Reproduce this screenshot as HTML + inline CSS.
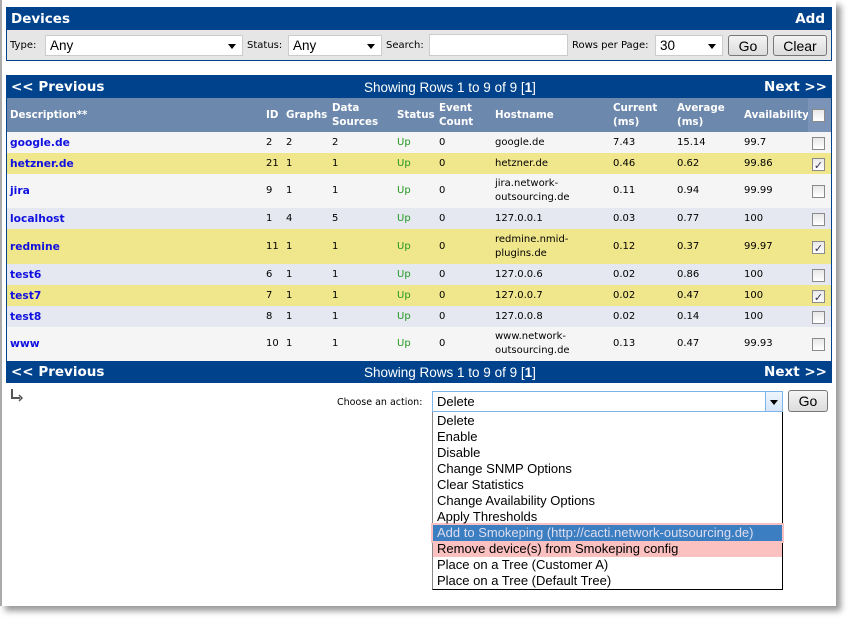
<!DOCTYPE html>
<html><head><meta charset="utf-8"><style>
*{margin:0;padding:0;box-sizing:border-box}
body{width:850px;height:619px;background:#fff;position:relative;overflow:hidden;font-family:"DejaVu Sans",Verdana,sans-serif;font-size:10px}
#frame{position:absolute;left:0;top:0;width:836px;height:606px;background:#fff;border-left:2px solid #aaa;box-shadow:5px 5px 6px #999}
.abs{position:absolute}
.bar{background:#00438c;color:#fff;font-weight:bold}
.row{position:absolute;left:7px;width:824px;display:flex;align-items:center}
.row>div{position:absolute;line-height:14px}
.lnk{color:#1010e0;font-weight:bold;font-size:10.7px}
.up{color:#229922}
.cb{width:13px;height:13px;border:1px solid #8a8a8a;background:linear-gradient(#e8e8e8,#fff);left:805px;top:50%;margin-top:-6px;font-size:11px;line-height:11px;color:#335;text-align:center}
.sel{font-family:"Liberation Sans",Arial,sans-serif;font-size:13.5px;background:#fff;border:1px solid #ccc}
.btn{font-family:"Liberation Sans",Arial,sans-serif;font-size:14px;border:1px solid #777;border-radius:3px;background:linear-gradient(#f4f4f4,#dcdcdc);text-align:center;line-height:20px}
.arr{position:absolute;right:6px;top:8px;width:0;height:0;border-left:4px solid transparent;border-right:4px solid transparent;border-top:5px solid #000}
.dd div{font-family:"Liberation Sans",Arial,sans-serif;font-size:13px;height:16px;line-height:16px;padding-left:4px;color:#000}
.hd{font-size:10.3px}
</style></head><body>
<div id="frame"></div>

<div class="abs" style="left:6px;top:7px;width:826px;height:54px;border:1px solid #00438c;background:#e6e6e6"></div>
<div class="abs bar" style="left:6px;top:7px;width:826px;height:23px;font-size:13.5px;line-height:24px;padding-left:5px">Devices<span style="position:absolute;right:7px">Add</span></div>
<div class="abs" style="left:10px;top:40px">Type:</div>
<div class="abs sel" style="left:45px;top:35px;width:198px;height:21px;padding-left:4px;line-height:19px">Any<span class="arr"></span></div>
<div class="abs" style="left:247px;top:40px">Status:</div>
<div class="abs sel" style="left:288px;top:35px;width:94px;height:21px;padding-left:4px;line-height:19px">Any<span class="arr"></span></div>
<div class="abs" style="left:386px;top:40px">Search:</div>
<div class="abs sel" style="left:429px;top:34px;width:139px;height:22px"></div>
<div class="abs" style="left:572px;top:40px">Rows per Page:</div>
<div class="abs sel" style="left:655px;top:35px;width:68px;height:21px;padding-left:4px;line-height:19px">30<span class="arr"></span></div>
<div class="abs btn" style="left:728px;top:35px;width:40px;height:21px">Go</div>
<div class="abs btn" style="left:773px;top:35px;width:54px;height:21px">Clear</div>

<div class="abs" style="left:6px;top:75px;width:826px;height:308px;border:1px solid #00438c;background:#f5f5f5"></div>
<div class="abs bar" style="left:6px;top:76px;width:826px;height:22px;font-size:13.5px;line-height:23px">
<span style="position:absolute;left:5px">&lt;&lt; Previous</span>
<span style="position:absolute;left:358px;font-weight:normal;font-family:'Liberation Sans',Arial,sans-serif;font-size:13.5px">Showing Rows 1 to 9 of 9 [<b>1</b>]</span>
<span style="position:absolute;right:5px">Next &gt;&gt;</span></div>

<div class="row hd" style="top:98px;height:34px;background:#6d88ad;color:#fff;font-weight:bold">
<div style="left:3px">Description**</div>
<div style="left:259px">ID</div>
<div style="left:279px">Graphs</div>
<div style="left:325px">Data<br>Sources</div>
<div style="left:390px">Status</div>
<div style="left:432px">Event<br>Count</div>
<div style="left:488px">Hostname</div>
<div style="left:606px">Current<br>(ms)</div>
<div style="left:670px">Average<br>(ms)</div>
<div style="left:737px">Availability</div>
<div style="left:801px;width:23px;height:34px;background:#7a93b6"></div>
<div class="cb"></div>
</div>

<div class="row" style="top:132px;height:21px;background:#f5f5f5"><div class="lnk" style="left:3px">google.de</div><div style="left:259px">2</div><div style="left:279px">2</div><div style="left:325px">2</div><div class="up" style="left:390px">Up</div><div style="left:432px">0</div><div style="left:488px">google.de</div><div style="left:606px">7.43</div><div style="left:670px">15.14</div><div style="left:737px">99.7</div><div class="cb"></div></div>
<div class="row" style="top:153px;height:21px;background:#f0e68c"><div class="lnk" style="left:3px">hetzner.de</div><div style="left:259px">21</div><div style="left:279px">1</div><div style="left:325px">1</div><div class="up" style="left:390px">Up</div><div style="left:432px">0</div><div style="left:488px">hetzner.de</div><div style="left:606px">0.46</div><div style="left:670px">0.62</div><div style="left:737px">99.86</div><div class="cb">✓</div></div>
<div class="row" style="top:174px;height:34px;background:#f5f5f5"><div class="lnk" style="left:3px">jira</div><div style="left:259px">9</div><div style="left:279px">1</div><div style="left:325px">1</div><div class="up" style="left:390px">Up</div><div style="left:432px">0</div><div style="left:488px">jira.network-<br>outsourcing.de</div><div style="left:606px">0.11</div><div style="left:670px">0.94</div><div style="left:737px">99.99</div><div class="cb"></div></div>
<div class="row" style="top:208px;height:21px;background:#e5e8f0"><div class="lnk" style="left:3px">localhost</div><div style="left:259px">1</div><div style="left:279px">4</div><div style="left:325px">5</div><div class="up" style="left:390px">Up</div><div style="left:432px">0</div><div style="left:488px">127.0.0.1</div><div style="left:606px">0.03</div><div style="left:670px">0.77</div><div style="left:737px">100</div><div class="cb"></div></div>
<div class="row" style="top:229px;height:35px;background:#f0e68c"><div class="lnk" style="left:3px">redmine</div><div style="left:259px">11</div><div style="left:279px">1</div><div style="left:325px">1</div><div class="up" style="left:390px">Up</div><div style="left:432px">0</div><div style="left:488px">redmine.nmid-<br>plugins.de</div><div style="left:606px">0.12</div><div style="left:670px">0.37</div><div style="left:737px">99.97</div><div class="cb">✓</div></div>
<div class="row" style="top:264px;height:21px;background:#e5e8f0"><div class="lnk" style="left:3px">test6</div><div style="left:259px">6</div><div style="left:279px">1</div><div style="left:325px">1</div><div class="up" style="left:390px">Up</div><div style="left:432px">0</div><div style="left:488px">127.0.0.6</div><div style="left:606px">0.02</div><div style="left:670px">0.86</div><div style="left:737px">100</div><div class="cb"></div></div>
<div class="row" style="top:285px;height:21px;background:#f0e68c"><div class="lnk" style="left:3px">test7</div><div style="left:259px">7</div><div style="left:279px">1</div><div style="left:325px">1</div><div class="up" style="left:390px">Up</div><div style="left:432px">0</div><div style="left:488px">127.0.0.7</div><div style="left:606px">0.02</div><div style="left:670px">0.47</div><div style="left:737px">100</div><div class="cb">✓</div></div>
<div class="row" style="top:306px;height:21px;background:#e5e8f0"><div class="lnk" style="left:3px">test8</div><div style="left:259px">8</div><div style="left:279px">1</div><div style="left:325px">1</div><div class="up" style="left:390px">Up</div><div style="left:432px">0</div><div style="left:488px">127.0.0.8</div><div style="left:606px">0.02</div><div style="left:670px">0.14</div><div style="left:737px">100</div><div class="cb"></div></div>
<div class="row" style="top:327px;height:34px;background:#f5f5f5"><div class="lnk" style="left:3px">www</div><div style="left:259px">10</div><div style="left:279px">1</div><div style="left:325px">1</div><div class="up" style="left:390px">Up</div><div style="left:432px">0</div><div style="left:488px">www.network-<br>outsourcing.de</div><div style="left:606px">0.13</div><div style="left:670px">0.47</div><div style="left:737px">99.93</div><div class="cb"></div></div>

<div class="abs bar" style="left:6px;top:361px;width:826px;height:22px;font-size:13.5px;line-height:23px">
<span style="position:absolute;left:5px">&lt;&lt; Previous</span>
<span style="position:absolute;left:358px;font-weight:normal;font-family:'Liberation Sans',Arial,sans-serif;font-size:13.5px">Showing Rows 1 to 9 of 9 [<b>1</b>]</span>
<span style="position:absolute;right:5px">Next &gt;&gt;</span></div>

<svg class="abs" style="left:10px;top:388px" width="14" height="14"><path d="M2 1V10H10" stroke="#555" stroke-width="2" fill="none"/><path d="M9 7L12 10L9 13" stroke="#555" stroke-width="1.5" fill="none"/></svg>
<div class="abs" style="left:337px;top:397px;font-size:9.5px">Choose an action:</div>
<div class="abs" style="left:432px;top:391px;width:351px;height:21px;border:1px solid #7eb4ea;background:#fff;font-family:'Liberation Sans',Arial,sans-serif;font-size:13px;line-height:19px;padding-left:4px">Delete
<div style="position:absolute;right:0;top:0;width:17px;height:19px;border-left:1px solid #7eb4ea;background:linear-gradient(#eef5fc,#d5e6f7)"><span class="arr" style="right:4px"></span></div></div>
<div class="abs btn" style="left:788px;top:390px;width:40px;height:22px">Go</div>
<div class="abs dd" style="left:432px;top:412px;width:351px;height:178px;border:1px solid #000;border-top:none;border-left:1px solid #888;background:#fff">
<div style="margin-top:1px">Delete</div><div>Enable</div><div>Disable</div><div>Change SNMP Options</div><div>Clear Statistics</div><div>Change Availability Options</div><div>Apply Thresholds</div>
<div style="background:#3b7ec2;color:#dde;box-shadow:0 0 0 2px #f8c0c0">Add to Smokeping (http://cacti.network-outsourcing.de)</div>
<div style="background:#fbc0c0">Remove device(s) from Smokeping config</div>
<div>Place on a Tree (Customer A)</div><div>Place on a Tree (Default Tree)</div>
</div>
</body></html>
